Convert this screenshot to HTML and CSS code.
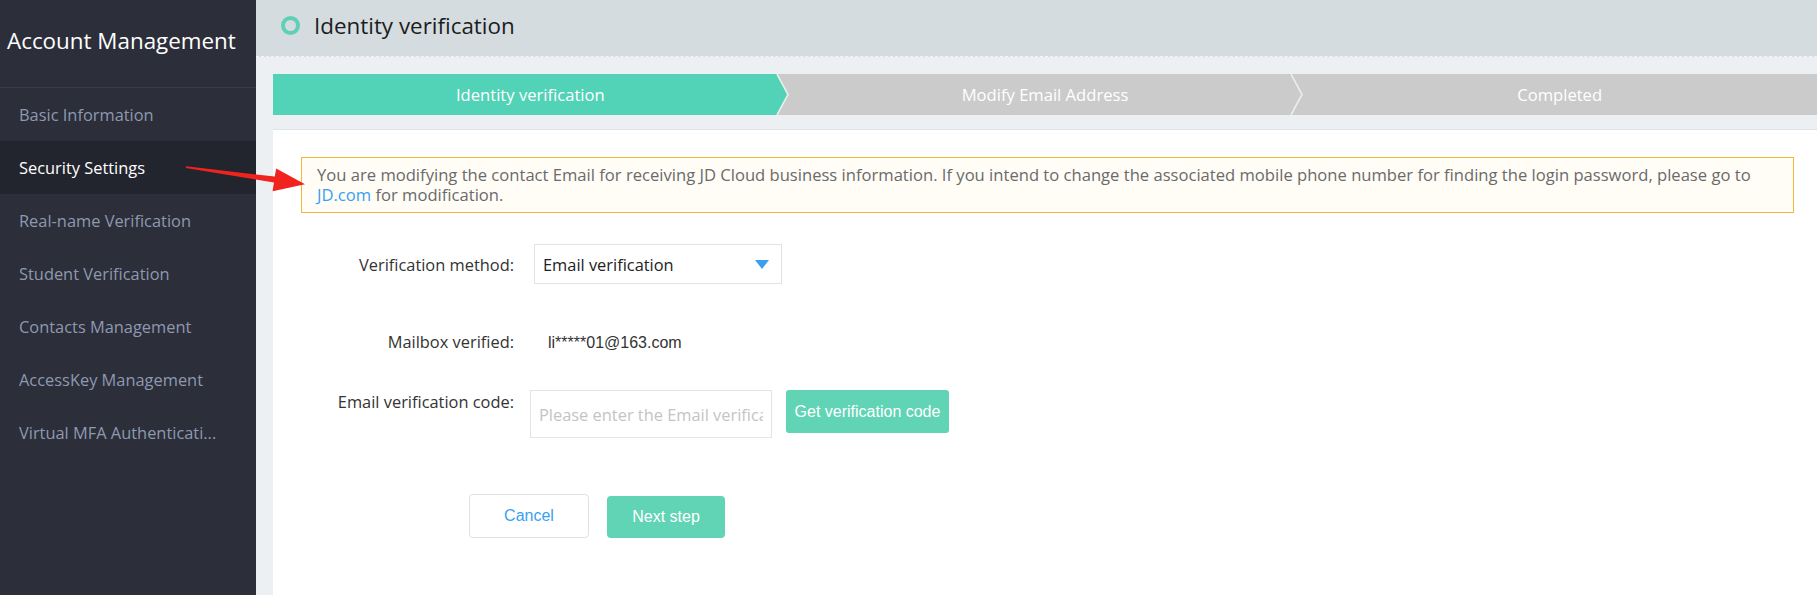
FILE: index.html
```html
<!DOCTYPE html>
<html lang="en">
<head>
<meta charset="utf-8">
<title>Identity verification</title>
<link rel="stylesheet" href="styles.css">
</head>
<body>
<div class="app">
  <aside class="sidebar">
    <div class="side-title">Account Management</div>
    <nav class="menu">
      <div class="menu-item">Basic Information</div>
      <div class="menu-item active">Security Settings</div>
      <div class="menu-item">Real-name Verification</div>
      <div class="menu-item">Student Verification</div>
      <div class="menu-item">Contacts Management</div>
      <div class="menu-item">AccessKey Management</div>
      <div class="menu-item">Virtual MFA Authenticati...</div>
    </nav>
  </aside>
  <main class="main">
    <header class="page-head">
      <span class="ring"></span>
      <h1 class="page-title">Identity verification</h1>
    </header>
    <div class="steps">
      <div class="step done">
        <span class="step-text">Identity verification</span>
      </div>
      <div class="step">
        <span class="step-text">Modify Email Address</span>
        <svg class="chev" width="14" height="41" viewBox="0 0 14 41"><polyline points="1,0 12,20.5 1,41" fill="none" stroke="#e9eeec" stroke-width="1.6"/></svg>
      </div>
      <div class="step">
        <span class="step-text">Completed</span>
      </div>
    </div>
    <section class="card">
      <div class="notice">You are modifying the contact Email for receiving JD Cloud business information. If you intend to change the associated mobile phone number for finding the login password, please go to<br><a class="link" href="#">JD.com</a> for modification.</div>
      <div class="form">
        <div class="row row-method">
          <label class="label">Verification method:</label>
          <div class="select">
            <span class="select-text">Email verification</span>
            <svg class="caret" width="14" height="9" viewBox="0 0 14 9"><polygon points="0,0 14,0 7,9" fill="#3a9ff2"/></svg>
          </div>
        </div>
        <div class="row row-mail">
          <label class="label">Mailbox verified:</label>
          <span class="value">li*****01@163.com</span>
        </div>
        <div class="row row-code">
          <label class="label">Email verification code:</label>
          <input class="input" type="text" placeholder="Please enter the Email verification code">
          <button class="btn-code" type="button">Get verification code</button>
        </div>
        <div class="row row-actions">
          <button class="btn btn-cancel" type="button">Cancel</button>
          <button class="btn btn-next" type="button">Next step</button>
        </div>
      </div>
    </section>
  </main>
  <svg class="annot-arrow" width="1817" height="595" viewBox="0 0 1817 595">
    <polygon points="186.1,166.3 274.7,176.6 276.2,168.6 305,184.2 272.6,191.2 273.9,182.6 185.9,167.9" fill="#f0231e"/>
  </svg>
</div>
</body>
</html>
```
FILE: styles.css
```css
* { box-sizing: border-box; }
html, body { margin: 0; padding: 0; }
body {
  width: 1817px;
  height: 595px;
  overflow: hidden;
  font-family: "Open Sans", "Noto Sans", sans-serif;
  background: #ecf0f3;
}
.app {
  display: flex;
  height: 595px;
  position: relative;
}
.sidebar {
  width: 256px;
  flex: none;
  background: #2c2e39;
  color: #8e99b1;
}
.side-title {
  height: 88px;
  line-height: 82px;
  padding-left: 7px;
  font-size: 22.4px;
  color: #ffffff;
  border-bottom: 1px solid #393c48;
  white-space: nowrap;
}
.menu { display: flex; flex-direction: column; }
.menu-item {
  height: 53px;
  line-height: 53px;
  padding-left: 19px;
  font-size: 16.4px;
  white-space: nowrap;
}
.menu-item.active {
  background: #23252e;
  color: #ffffff;
}
.main {
  flex: 1;
  display: flex;
  flex-direction: column;
  min-width: 0;
}
.page-head {
  height: 57px;
  background: #d5dce0;
  border-bottom: 1px dashed #f2f4f6;
  display: flex;
  align-items: center;
  padding-left: 25px;
  padding-bottom: 6px;
}
.ring {
  width: 19px;
  height: 19px;
  border: 4px solid #5dd0b6;
  border-radius: 50%;
  flex: none;
}
.page-title {
  margin: 0 0 0 14px;
  font-size: 22.4px;
  font-weight: 400;
  color: #1c1c1c;
}
.steps {
  margin: 17px 0 0 17px;
  height: 41px;
  display: flex;
  background: #cbcbcb;
}
.step {
  flex: 1;
  position: relative;
  display: flex;
  align-items: center;
  justify-content: center;
  color: #ffffff;
  font-size: 16.6px;
}
.step.done {
  background: #52d2b6;
  clip-path: polygon(0 0, calc(100% - 11px) 0, 100% 50%, calc(100% - 11px) 100%, 0 100%);
}
.step-text { position: relative; }
.chev {
  position: absolute;
  right: -2px;
  top: 0;
}
.step.done + .step::before {
  content: "";
  position: absolute;
  left: -12px;
  top: 0;
  width: 14px;
  height: 41px;
  background: no-repeat url("data:image/svg+xml;utf8,<svg xmlns='http://www.w3.org/2000/svg' width='14' height='41'><polyline points='1,0 12,20.5 1,41' fill='none' stroke='%23e9eeec' stroke-width='1.6'/></svg>");
}
.card {
  flex: 1;
  margin: 14px 0 0 17px;
  background: #ffffff;
  border-top: 1px solid #dde4ea;
  padding: 27px 23px 0 28px;
}
.notice {
  border: 1px solid #f4b73a;
  background: #fffdf6;
  color: #6a6a6a;
  font-size: 16.6px;
  line-height: 20px;
  padding: 7px 10px 7px 15px;
}
.link { color: #3a9ff2; text-decoration: none; }
.form {
  display: flex;
  flex-direction: column;
}
.row {
  display: flex;
  align-items: center;
}
.label {
  width: 214px;
  flex: none;
  text-align: right;
  padding-right: 1px;
  font-size: 16.4px;
  color: #333333;
  white-space: nowrap;
}
.row-method { margin-top: 31px; height: 40px; }
.select {
  margin-left: 19px;
  width: 248px;
  height: 40px;
  border: 1px solid #e2e2e2;
  display: flex;
  align-items: center;
  justify-content: space-between;
  padding: 0 12px 0 8px;
  font-size: 16.4px;
  color: #222222;
}
.row-mail { margin-top: 37px; height: 40px; align-items: baseline; padding-top: 9px; }
.value {
  margin-left: 33px;
  font-family: "Liberation Sans", Arial, sans-serif;
  font-size: 16px;
  color: #333333;
}
.row-code { margin-top: 29px; align-items: flex-start; }
.row-code .label { line-height: 24px; }
.input {
  margin-left: 15px;
  width: 242px;
  height: 48px;
  border: 1px solid #e4e4e4;
  padding: 0 8px;
  font-family: "Open Sans", sans-serif;
  font-size: 16.4px;
  color: #333;
  outline: none;
}
.input::placeholder { color: #c4c4c4; }
.btn-code {
  margin-left: 14px;
  width: 163px;
  height: 43px;
  border: none;
  border-radius: 3px;
  background: #60d4b5;
  color: #ffffff;
  font-family: "Liberation Sans", Arial, sans-serif;
  font-size: 16px;
  padding: 0;
}
.row-actions { margin-top: 56px; padding-left: 168px; gap: 18px; }
.btn {
  width: 120px;
  height: 44px;
  border-radius: 4px;
  font-family: "Liberation Sans", Arial, sans-serif;
  font-size: 16px;
  padding: 0;
}
.btn-cancel {
  background: #ffffff;
  border: 1px solid #dbe2ea;
  color: #3a9ff2;
}
.btn-next {
  width: 118px;
  height: 42px;
  margin-top: 1px;
  background: #60d4b5;
  border: none;
  color: #ffffff;
}
.annot-arrow {
  position: absolute;
  left: 0;
  top: 0;
  pointer-events: none;
}
```
